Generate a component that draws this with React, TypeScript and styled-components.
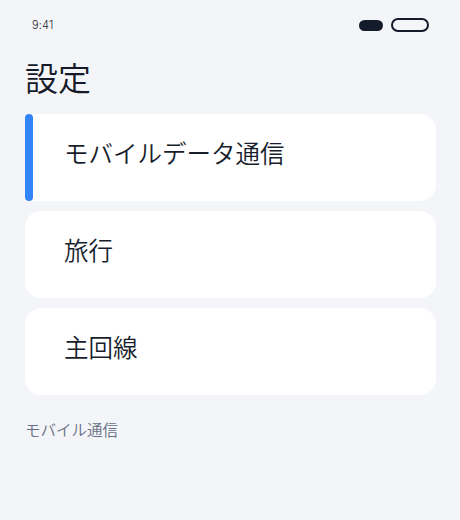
import React from 'react';
import { createGlobalStyle, styled } from 'styled-components';

const GlobalStyle = createGlobalStyle`
  html, body {
    margin: 0;
    padding: 0;
    background: #f4f5f8;
  }
  body {
    font-family: Inter, "Noto Sans CJK JP", "Noto Sans", sans-serif;
    color: #1a2030;
  }
`;

const items = [
  { label: 'モバイルデータ通信', active: true },
  { label: '旅行', active: false },
  { label: '主回線', active: false },
];

const App: React.FC = () => {
  return (
    <Screen>
      <GlobalStyle />
      <StatusBar>
        <Time>9:41</Time>
        <Indicators>
          <SignalPill />
          <BatteryPill />
        </Indicators>
      </StatusBar>
      <Title>設定</Title>
      <List>
        {items.map((item) => (
          <Card key={item.label} $active={item.active}>
            <CardLabel>{item.label}</CardLabel>
          </Card>
        ))}
      </List>
      <SectionLabel>モバイル通信</SectionLabel>
    </Screen>
  );
};

const Screen = styled.div`
  width: 460px;
  height: 520px;
  box-sizing: border-box;
  padding: 0 24px 0 25px;
  display: flex;
  flex-direction: column;
`;

const StatusBar = styled.div`
  height: 50px;
  display: flex;
  align-items: center;
  justify-content: space-between;
  padding: 0 7px 0 7px;
`;

const Time = styled.span`
  font-size: 11px;
  font-weight: 350;
  color: #1f2430;
  letter-spacing: 0.2px;
`;

const Indicators = styled.div`
  display: flex;
  align-items: center;
  gap: 8px;
`;

const SignalPill = styled.span`
  width: 24px;
  height: 11px;
  border-radius: 6px;
  background: #141b2b;
`;

const BatteryPill = styled.span`
  width: 34px;
  height: 10px;
  border: 2px solid #141b2b;
  border-radius: 7px;
`;

const Title = styled.h1`
  margin: 11px 0 17px 0;
  font-size: 33px;
  font-weight: 350;
  line-height: 36px;
  color: #141a28;
`;

const List = styled.div`
  display: flex;
  flex-direction: column;
  gap: 10px;
`;

const Card = styled.div<{ $active: boolean }>`
  position: relative;
  height: 87px;
  background: #ffffff;
  border-radius: 16px;
  display: flex;
  align-items: center;
  padding-left: 39px;
  ${({ $active }) =>
    $active &&
    `
    border-top-left-radius: 0;
    border-bottom-left-radius: 0;
    &::before {
      content: '';
      position: absolute;
      left: 0;
      top: 0;
      bottom: 0;
      width: 8px;
      border-radius: 4px;
      background: #3384f8;
    }
  `}
`;

const CardLabel = styled.span`
  font-size: 24.5px;
  font-weight: 350;
  color: #181e2c;
  line-height: 1;
  margin-top: -6px;
`;

const SectionLabel = styled.div`
  margin-top: 23px;
  font-size: 15.5px;
  font-weight: 350;
  color: #667085;
`;

export default App;
